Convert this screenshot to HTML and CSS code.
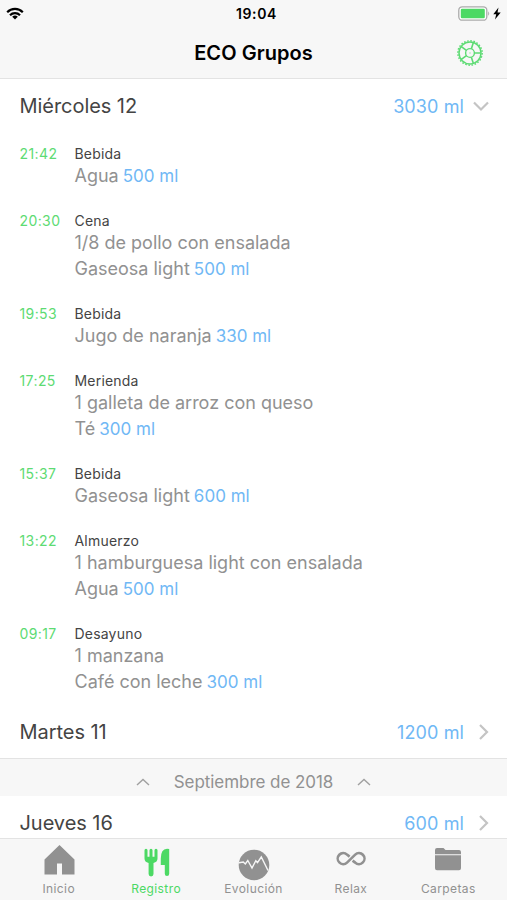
FILE: index.html
```html
<!DOCTYPE html>
<html lang="es">
<head>
    <meta charset="UTF-8">
    <meta name="viewport" content="width=device-width, initial-scale=1.0">
    <title>ECO Grupos</title>
    <link rel="stylesheet" href="styles.css">
</head>
<body>
    <header class="header">
        <div class="status-bar">
            <svg class="wifi" viewBox="0 0 18 13" width="18" height="13">
                <g fill="none" stroke="#000" stroke-width="2.2">
                    <path d="M1.2 5.2a11 11 0 0 1 15.6 0"/>
                    <path d="M4 8.2a7 7 0 0 1 10 0"/>
                </g>
                <path d="M9 12.6 6.2 9.8a4 4 0 0 1 5.6 0z"/>
            </svg>
            <span class="clock">19:04</span>
            <div class="power">
                <svg viewBox="0 0 32 15" width="32" height="15">
                    <rect x=".8" y=".8" width="28" height="13.4" rx="3.5" fill="#fff" stroke="#aaa" stroke-width="1.3"/>
                    <rect x="2.8" y="2.8" width="24" height="9.4" rx="1.3" fill="#4cd964"/>
                    <path d="M30.2 5.2q2 2.3 0 4.6z" fill="#aaa"/>
                </svg>
                <svg viewBox="0 0 8 13" width="8" height="13">
                    <path d="M5.5.5.3 7.2h2.9L2 12.5l5.7-7H4.5z"/>
                </svg>
            </div>
        </div>
        <div class="title-bar">
            <h1 class="title">ECO Grupos</h1>
            <svg class="settings" viewBox="-13 -13 26 26" width="26" height="26" fill="none" stroke="#5ddb73">
                <circle r="12.2" stroke-width="1.4" stroke-dasharray="1.6 1.59"/>
                <circle r="11" stroke-width="1.5"/>
                <circle r="4.4" stroke-width="1.4"/>
                <circle r=".5" stroke-width=".6" opacity=".6"/>
                <path stroke-width="1.6" d="M4.4 0H10.7M1.36 4.18 3.3 10.2M-3.56 2.59-8.66 6.29M-3.56-2.59-8.66-6.29M1.36-4.18 3.3-10.2"/>
            </svg>
        </div>
    </header>

    <main class="log">
        <div class="day">
            <h2 class="day-name">Miércoles 12</h2>
            <span class="day-total">3030 ml</span>
            <svg class="chevron" viewBox="0 0 16 16" width="16" height="16"><path d="M1 4.5 8 11.5 15 4.5"/></svg>
        </div>
        <div class="entries">
            <div class="entry">
                <time class="entry-time">21:42</time>
                <div>
                    <h3 class="entry-type">Bebida</h3>
                    <p>Agua <span class="ml">500 ml</span></p>
                </div>
            </div>
            <div class="entry">
                <time class="entry-time">20:30</time>
                <div>
                    <h3 class="entry-type">Cena</h3>
                    <p>1/8 de pollo con ensalada</p>
                    <p>Gaseosa light <span class="ml">500 ml</span></p>
                </div>
            </div>
            <div class="entry">
                <time class="entry-time">19:53</time>
                <div>
                    <h3 class="entry-type">Bebida</h3>
                    <p>Jugo de naranja <span class="ml">330 ml</span></p>
                </div>
            </div>
            <div class="entry">
                <time class="entry-time">17:25</time>
                <div>
                    <h3 class="entry-type">Merienda</h3>
                    <p>1 galleta de arroz con queso</p>
                    <p>Té <span class="ml">300 ml</span></p>
                </div>
            </div>
            <div class="entry">
                <time class="entry-time">15:37</time>
                <div>
                    <h3 class="entry-type">Bebida</h3>
                    <p>Gaseosa light <span class="ml">600 ml</span></p>
                </div>
            </div>
            <div class="entry">
                <time class="entry-time">13:22</time>
                <div>
                    <h3 class="entry-type">Almuerzo</h3>
                    <p>1 hamburguesa light con ensalada</p>
                    <p>Agua <span class="ml">500 ml</span></p>
                </div>
            </div>
            <div class="entry">
                <time class="entry-time">09:17</time>
                <div>
                    <h3 class="entry-type">Desayuno</h3>
                    <p>1 manzana</p>
                    <p>Café con leche <span class="ml">300 ml</span></p>
                </div>
            </div>
        </div>
        <div class="day">
            <h2 class="day-name">Martes 11</h2>
            <span class="day-total">1200 ml</span>
            <svg class="chevron" viewBox="0 0 16 16" width="16" height="16"><path d="M7 1 14 8 7 15"/></svg>
        </div>
        <div class="month">
            <svg class="caret" viewBox="0 0 14 8" width="14" height="8"><path d="M1 7 7 1.5 13 7"/></svg>
            <span class="month-name">Septiembre de 2018</span>
            <svg class="caret" viewBox="0 0 14 8" width="14" height="8"><path d="M1 7 7 1.5 13 7"/></svg>
        </div>
        <div class="day">
            <h2 class="day-name">Jueves 16</h2>
            <span class="day-total">600 ml</span>
            <svg class="chevron" viewBox="0 0 16 16" width="16" height="16"><path d="M7 1 14 8 7 15"/></svg>
        </div>
    </main>

    <nav class="tabs">
        <a class="tab">
            <svg viewBox="0 0 32 35" width="32" height="35"><path d="M16.5 1 31.5 15.5v15H19V19.5h-5v11H1.500v-15z"/></svg>
            <span>Inicio</span>
        </a>
        <a class="tab active">
            <svg viewBox="0 0 32 35" width="32" height="35">
                <path d="M4.500 6.200a1.500 1.500 0 0 1 3 0v6.500h2v-6.500a1.500 1.500 0 0 1 3 0v6.500h2v-6.500a1.500 1.500 0 0 1 3 0v8.300q0 3.500-4 4.500v11a2.400 2.400 0 0 1-4.900 0v-11q-4.100-1-4.100-4.500z"/>
                <path d="M29.200 5v24.800a2.200 2.200 0 0 1-4.400 0v-8.800h-4v-6.500q0-9.500 6.200-9.800z"/>
            </svg>
            <span>Registro</span>
        </a>
        <a class="tab">
            <svg viewBox="0 0 32 35" width="32" height="35">
                <circle cx="16" cy="21" r="15.300"/>
                <path d="M1 18.800 5.300 18l2 2 2.500-3.500 4.200 7.500 3.800-7.300 1.700 2L23.300 13l6.700 13.500" fill="none" stroke="#f7f7f7" stroke-width="1.400"/>
            </svg>
            <span>Evolución</span>
        </a>
        <a class="tab">
            <svg viewBox="0 0 32 35" width="32" height="35">
                <path d="M14.600 12.600 12 10.600A5.500 5.500 0 1 0 12 18.600L20.200 10.600A5.500 5.500 0 1 1 20.200 18.600L17.600 16.600" fill="none" stroke="#919191" stroke-width="2.600"/>
            </svg>
            <span>Relax</span>
        </a>
        <a class="tab">
            <svg viewBox="0 0 32 35" width="32" height="35">
                <path d="M3 10.200V6q0-2 2-2h6.500l2 2H27q2 0 2 2v2.200zM3 11.300h26v13q0 2-2 2H5q-2 0-2-2z"/>
            </svg>
            <span>Carpetas</span>
        </a>
    </nav>
</body>
</html>
```
FILE: styles.css
```css
:root {
    --green: #4cd964;
    --blue: #70b8f5;
    --gray: #919191;
    --bar: #f7f7f7;
    --border: #e3e3e3;
}

* {
    margin: 0;
    padding: 0;
    box-sizing: border-box;
}

body {
    height: 100vh;
    display: flex;
    flex-direction: column;
    overflow: hidden;
    font-family: Inter, 'Liberation Sans', sans-serif;
    background: #fff;
    color: #444;
}

svg {
    display: block;
    flex-shrink: 0;
    overflow: visible;
}

.header {
    height: 79px;
    flex-shrink: 0;
    background: var(--bar);
    border-bottom: 1px solid var(--border);
    color: #000;
}

.status-bar {
    height: 27px;
    display: grid;
    grid-template-columns: 1fr auto 1fr;
    align-items: center;
    padding: 0 5px 0 6px;
}

.clock {
    font-size: 14px;
    font-weight: 600;
    letter-spacing: 0.6px;
    padding-left: 5px;
}

.power {
    display: flex;
    justify-content: flex-end;
    align-items: center;
    gap: 3px;
    margin-right: 1px;
}

.title-bar {
    height: 51px;
    display: grid;
    grid-template-columns: 1fr auto 1fr;
    align-items: center;
    padding: 0 24px;
}

.title {
    grid-column: 2;
    font-size: 20px;
    font-weight: 600;
    letter-spacing: 0.05px;
}

.settings {
    justify-self: end;
}

.log {
    flex: 1;
    min-height: 0;
    overflow: hidden;
}

.day {
    height: 53px;
    display: flex;
    align-items: center;
    padding: 0 18px 0 19.5px;
}

.day-name {
    flex: 1;
    font-size: 20px;
    font-weight: 400;
    letter-spacing: -0.05px;
}

.day-total {
    font-size: 18px;
    letter-spacing: 0.1px;
    color: var(--blue);
    margin-right: 9px;
    padding-top: 1px;
}

.chevron {
    fill: none;
    stroke: #c4c4c4;
    stroke-width: 2.2;
}

.entries {
    padding: 13px 19.5px 10px;
}

.entry {
    display: flex;
    margin-bottom: 23px;
    font-size: 18px;
    line-height: 26px;
    color: var(--gray);
}

.entry:last-child {
    margin-bottom: 0;
}

.entry-time {
    width: 55px;
    font-size: 14px;
    line-height: 18px;
    letter-spacing: 0.4px;
    color: #5ddb73;
}

.entry-type {
    font-size: 14px;
    font-weight: 400;
    line-height: 18px;
    letter-spacing: 0.2px;
    color: #444;
}

.ml {
    color: var(--blue);
    font-size: 17px;
    margin-left: -1px;
}

.month {
    height: 38px;
    display: flex;
    justify-content: center;
    align-items: center;
    gap: 24px;
    padding-top: 9px;
    background: var(--bar);
    border-top: 1px solid var(--border);
    font-size: 17px;
    color: var(--gray);
}

.month-name {
    letter-spacing: -0.05px;
}

.caret {
    fill: none;
    stroke: #a0a0a0;
    stroke-width: 1.4;
}

.tabs {
    height: 62px;
    flex-shrink: 0;
    display: flex;
    padding: 5px 10px 0;
    background: var(--bar);
    border-top: 1px solid var(--border);
}

.tab {
    flex: 1;
    display: flex;
    flex-direction: column;
    align-items: center;
    font-size: 12px;
    line-height: 20px;
    letter-spacing: 0.4px;
    color: var(--gray);
    fill: var(--gray);
}

.active {
    color: var(--green);
    fill: var(--green);
}
```
